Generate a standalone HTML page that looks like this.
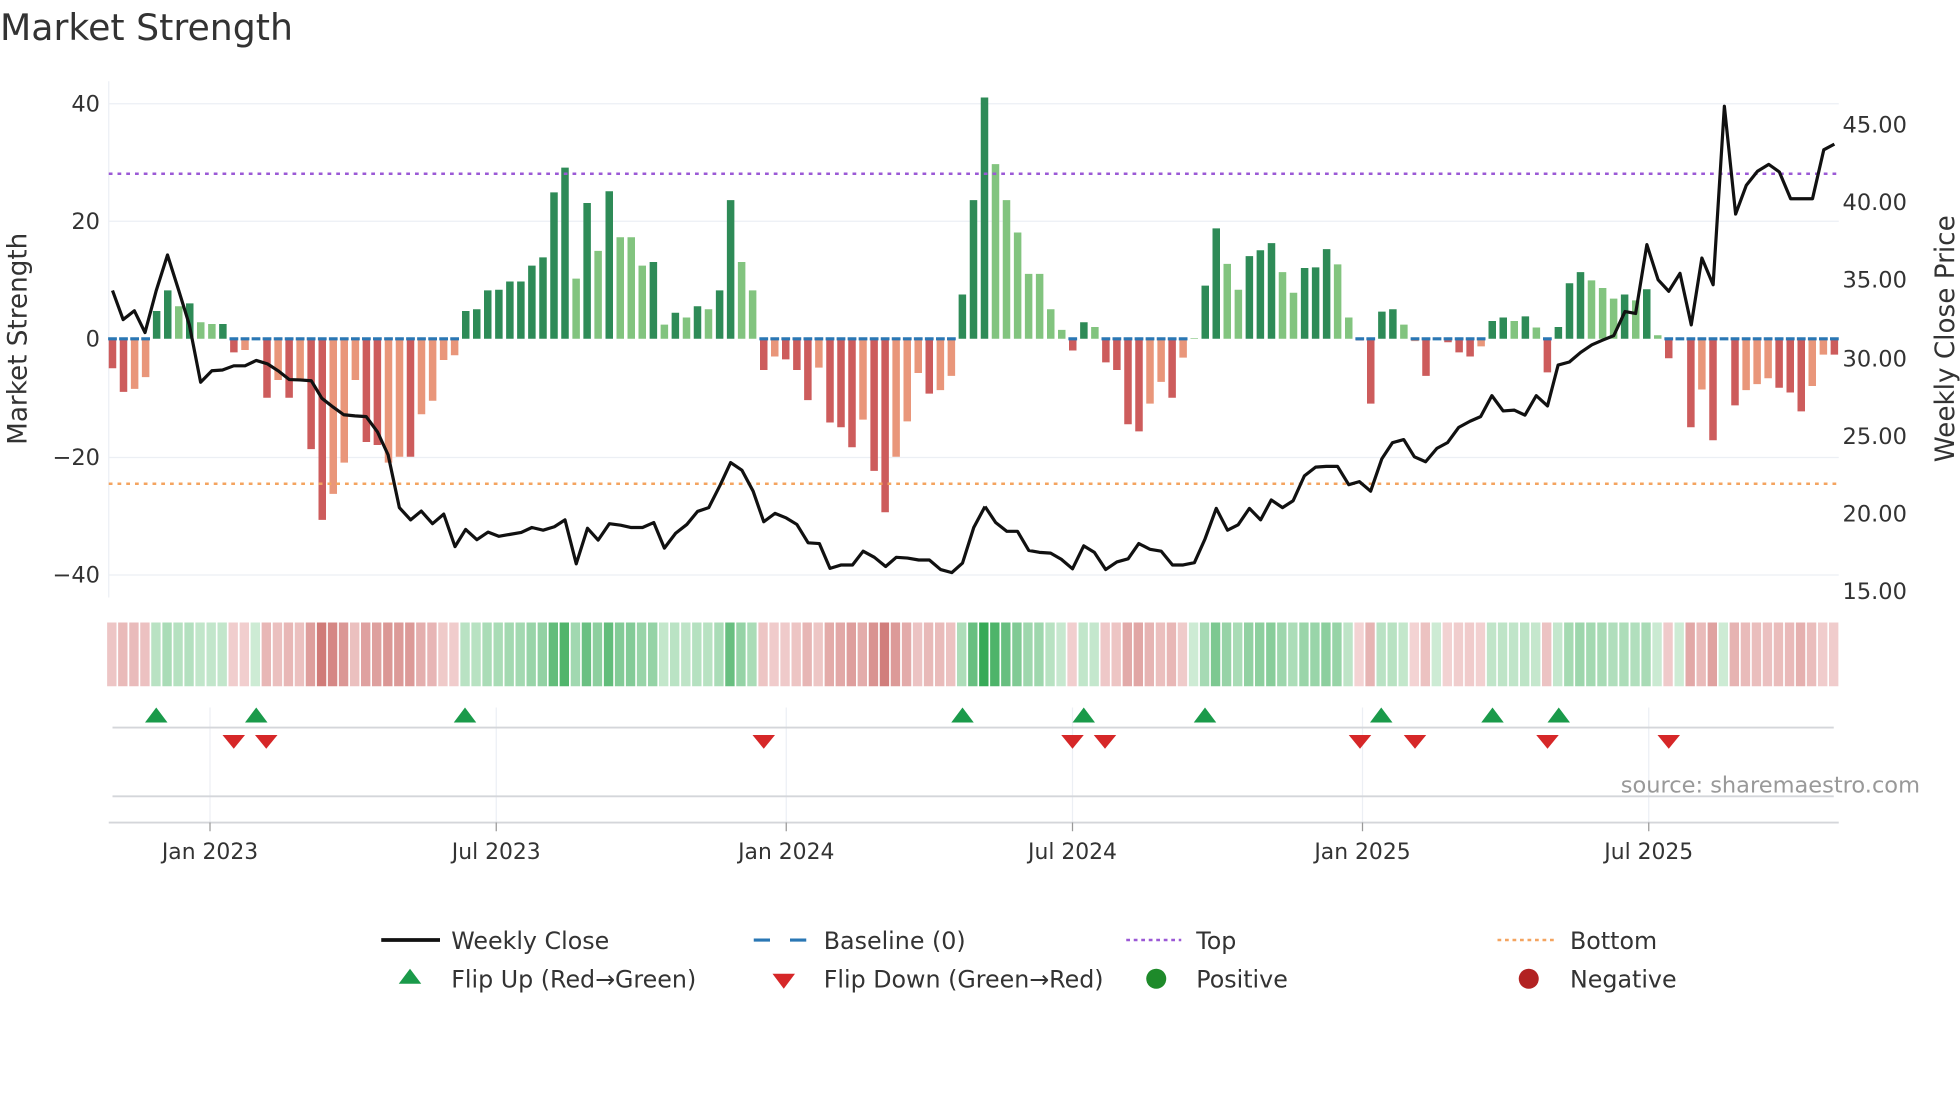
<!DOCTYPE html>
<html><head><meta charset="utf-8"><style>
html,body{margin:0;padding:0;background:#fff;overflow:hidden}
svg{display:block;font-family:"DejaVu Sans","Liberation Sans",sans-serif}
</style></head><body>
<svg id="s" width="1960" height="1102" viewBox="0 0 1568 881.6" xmlns="http://www.w3.org/2000/svg">
<rect width="1568" height="882" fill="#fff"/>
<text x="0" y="32" font-size="29" fill="#333">Market Strength</text>
<g stroke="#eceff4" stroke-width="1">
<line x1="87" x2="1471" y1="83" y2="83"/><line x1="87" x2="1471" y1="177" y2="177"/><line x1="87" x2="1471" y1="366" y2="366"/><line x1="87" x2="1471" y1="460" y2="460"/>
<line x1="87" x2="87" y1="65" y2="478"/>
</g>
<g font-size="18" fill="#333" text-anchor="end">
<text x="80" y="89">40</text><text x="80" y="183">20</text><text x="80" y="277">0</text><text x="80" y="372">−20</text><text x="80" y="466">−40</text>
</g>
<g font-size="18" fill="#333">
<text x="1474" y="106">45.00</text><text x="1474" y="168">40.00</text><text x="1474" y="230">35.00</text><text x="1474" y="293">30.00</text><text x="1474" y="355">25.00</text><text x="1474" y="417">20.00</text><text x="1474" y="479">15.00</text>
</g>
<text transform="translate(21,271) rotate(-90)" font-size="21" fill="#333" text-anchor="middle">Market Strength</text>
<text transform="translate(1563,271) rotate(-90)" font-size="21" fill="#333" text-anchor="middle">Weekly Close Price</text>
<g id="bars"></g>
<line x1="87" x2="1471" y1="139" y2="139" stroke="#9b59d6" stroke-width="2" stroke-dasharray="3,4"/>
<line x1="87" x2="1471" y1="387" y2="387" stroke="#f4a460" stroke-width="2" stroke-dasharray="3,4"/>
<g transform="scale(0.5,0.3058)"><polyline fill="none" stroke="#111" stroke-width="3.2" vector-effect="non-scaling-stroke" stroke-linejoin="round" points="180,760 197,836 215,813 232,870 250,760 268,667 286,760 303,850 321,1000 339,970 356,968 374,957 392,957 410,943 428,952 445,970 463,993 480,994 498,996 515,1042 533,1065 550,1085 568,1088 586,1090 604,1130 621,1190 639,1328 657,1360 674,1337 692,1370 710,1345 728,1430 745,1385 763,1412 781,1392 798,1403 816,1398 834,1393 851,1380 869,1387 887,1378 904,1360 922,1475 940,1382 957,1413 975,1370 993,1374 1010,1380 1028,1380 1046,1367 1063,1434 1081,1395 1099,1372 1116,1338 1134,1328 1152,1270 1169,1210 1187,1230 1205,1285 1222,1365 1240,1343 1258,1355 1275,1372 1293,1420 1311,1422 1328,1487 1346,1478 1364,1478 1381,1442 1399,1458 1417,1482 1434,1458 1452,1460 1470,1465 1487,1465 1505,1490 1523,1498 1540,1473 1558,1380 1576,1325"/></g>
<g transform="translate(784,0) scale(0.5,0.3058)"><polyline fill="none" stroke="#111" stroke-width="3.2" vector-effect="non-scaling-stroke" stroke-linejoin="round" points="8,1325 25,1367 43,1390 60,1390 78,1440 95,1445 113,1447 130,1463 148,1488 166,1428 183,1445 201,1490 219,1470 237,1462 254,1422 272,1437 290,1442 308,1478 325,1478 343,1472 360,1410 378,1330 396,1387 413,1373 431,1330 449,1360 466,1308 484,1328 501,1310 519,1245 537,1222 554,1220 572,1220 590,1268 607,1260 625,1285 643,1200 660,1158 678,1150 695,1195 713,1208 731,1173 748,1158 766,1118 784,1102 801,1090 819,1035 837,1075 855,1073 872,1086 890,1035 908,1062 925,955 943,947 961,922 979,902 996,890 1014,878 1032,815 1049,820 1067,640 1085,732 1102,762 1120,715 1138,850 1155,675 1173,745 1191,278 1209,560 1226,485 1244,448 1262,430 1279,450 1297,520 1315,520 1332,520 1350,392 1367,377"/></g>
<g id="heat"></g>
<g stroke="#eceff4" stroke-width="1">
<line x1="168" x2="168" y1="566" y2="658"/><line x1="397" x2="397" y1="566" y2="658"/><line x1="629" x2="629" y1="566" y2="658"/><line x1="858" x2="858" y1="566" y2="658"/><line x1="1090" x2="1090" y1="566" y2="658"/><line x1="1319" x2="1319" y1="566" y2="658"/>
</g>
<line x1="90" x2="1467" y1="582" y2="582" stroke="#d4d6da" stroke-width="1.5"/>
<line x1="90" x2="1467" y1="637" y2="637" stroke="#d4d6da" stroke-width="1.5"/>
<line x1="87" x2="1471" y1="658" y2="658" stroke="#d4d6da" stroke-width="1.5"/>
<g stroke="#999" stroke-width="1">
<line x1="168" x2="168" y1="658" y2="665"/><line x1="397" x2="397" y1="658" y2="665"/><line x1="629" x2="629" y1="658" y2="665"/><line x1="858" x2="858" y1="658" y2="665"/><line x1="1090" x2="1090" y1="658" y2="665"/><line x1="1319" x2="1319" y1="658" y2="665"/>
</g>
<g id="marks"></g>
<text x="1536" y="634" font-size="18" fill="#999" text-anchor="end">source: sharemaestro.com</text>
<g font-size="17.5" fill="#333" text-anchor="middle">
<text x="168" y="687">Jan 2023</text><text x="397" y="687">Jul 2023</text><text x="629" y="687">Jan 2024</text><text x="858" y="687">Jul 2024</text><text x="1090" y="687">Jan 2025</text><text x="1319" y="687">Jul 2025</text>
</g>
<g font-size="19" fill="#333">
<line x1="305" x2="352" y1="752" y2="752" stroke="#111" stroke-width="3"/><text x="361" y="759">Weekly Close</text>
<line x1="603" x2="645" y1="752" y2="752" stroke="#2a77b4" stroke-width="2.5" stroke-dasharray="13,16"/><text x="659" y="759">Baseline (0)</text>
<line x1="901" x2="945" y1="752" y2="752" stroke="#9b59d6" stroke-width="2" stroke-dasharray="3,3"/><text x="957" y="759">Top</text>
<line x1="1198" x2="1243" y1="752" y2="752" stroke="#f4a460" stroke-width="2" stroke-dasharray="3,3"/><text x="1256" y="759">Bottom</text>
<polygon points="319,787 337,787 328,775" fill="#1a9a4a"/><text x="361" y="790">Flip Up (Red→Green)</text>
<polygon points="618,779 636,779 627,791" fill="#d62728"/><text x="659" y="790">Flip Down (Green→Red)</text>
<circle cx="925" cy="783" r="8" fill="#1e8a2a"/><text x="957" y="790">Positive</text>
<circle cx="1223" cy="783" r="8" fill="#b22222"/><text x="1256" y="790">Negative</text>
</g>
</svg>
<script>
var A=[[-5,1],[-9,1],[-8.5,0],[-6.5,0],[4.7,1],[8.2,1],[5.5,0],[6,1],[2.8,0],[2.5,0],[2.5,1],[-2.3,1],[-1.9,0],[0,0],[-10,1],[-7,0],[-10,1],[-7,0],[-18.7,1],[-30.7,1],[-26.3,0],[-21,0],[-7,0],[-17.5,1],[-18,1],[-21,0],[-20,0],[-20,1],[-12.8,0],[-10.5,0],[-3.6,0],[-2.8,0],[4.7,1],[5,1],[8.2,1],[8.3,1],[9.7,1],[9.7,1],[12.4,1],[13.8,1],[24.8,1],[29,1],[10.2,0],[23,1],[14.9,0],[25,1],[17.2,0],[17.2,0],[12.4,0],[13,1],[2.4,0],[4.4,1],[3.6,0],[5.5,1],[5,0],[8.2,1],[23.5,1],[13,0],[8.2,0],[-5.3,1],[-3,0],[-3.5,1],[-5.3,1],[-10.4,1],[-4.9,0],[-14.2,1],[-15,1],[-18.4,1],[-13.7,0],[-22.4,1],[-29.4,1],[-20,0],[-14,0],[-5.8,0],[-9.3,1],[-8.7,0],[-6.3,0],[7.5,1],[23.5,1],
[40.9,1],[29.6,0],[23.5,0],[18,0],[11,0],[11,0],[5,0],[1.5,0],[-2,1],[2.8,1],[2,0],[-4,1],[-5.3,1],[-14.5,1],[-15.7,1],[-11,0],[-7.3,0],[-10,1],[-3.2,0],[0.1,0],[9,1],[18.7,1],[12.7,0],[8.3,0],[14,1],[15,1],[16.2,1],[11.3,0],[7.8,0],[12,1],[12.1,1],[15.2,1],[12.6,0],[3.6,0],[-0.3,1],[-11,1],[4.6,1],[5,1],[2.4,0],[-0.4,0],[-6.3,1],[0,0],[-0.6,1],[-2.3,1],[-3,1],[-1.3,0],[3,1],[3.6,1],[3,0],[3.8,1],[1.9,0],[-5.7,1],[2,1],[9.4,1],[11.3,1],[9.9,0],[8.6,0],[6.8,0],[7.5,1],[6.5,0],[8.4,1],[0.6,0],[-3.3,1],[0,0],[-15,1],[-8.6,0],[-17.2,1],[0,0],[-11.3,1],[-8.7,0],[-7.7,0],[-6.7,0],[-8.3,1],[-9.1,1],[-12.3,1],[-8,0],[-2.7,0],[-2.7,1]];
var N=A.length,x0=90,dx=(1467.5-90)/(N-1),h='',hm='';
for(var i=0;i<N;i++){var v=A[i][0],d=A[i][1],x=x0+i*dx,c;
 if(v>=0)c=d?'#2e8b57':'#82c47f';else c=d?'#cd5c5c':'#e9967a';
 var hh=Math.abs(v)*4.72,y=v>=0?271-hh:271;
 if(hh>0.3)h+='<rect x="'+(x-3).toFixed(1)+'" y="'+y.toFixed(1)+'" width="6" height="'+hh.toFixed(1)+'" fill="'+c+'"/>';
 if(v<=0||hh<=0.3)h+='<rect x="'+(x-3.5).toFixed(1)+'" y="269.8" width="7" height="2.5" fill="#2a77b4"/>';
 var t=Math.min(Math.abs(v)/35,1),col;
 if(v>=0){var r=Math.round(205-t*150),g=Math.round(235-t*65),b=Math.round(212-t*125);col='rgb('+r+','+g+','+b+')';}
 else{var r2=Math.round(243-t*40),g2=Math.round(212-t*102),b2=Math.round(212-t*105);col='rgb('+r2+','+g2+','+b2+')';}
 hm+='<rect x="'+(x-4.3).toFixed(1)+'" y="498" width="'+(dx-1.3).toFixed(1)+'" height="51" fill="'+col+'"/>';
}
document.getElementById('bars').innerHTML=h;
document.getElementById('heat').innerHTML=hm;
var up=[125,205,372,770,867,964,1105,1194,1247],dn=[187,213,611,858,884,1088,1132,1238,1335],m='';
up.forEach(function(x){m+='<polygon points="'+(x-9)+',578 '+(x+9)+',578 '+x+',566" fill="#1a9a4a"/>';});
dn.forEach(function(x){m+='<polygon points="'+(x-9)+',588 '+(x+9)+',588 '+x+',599" fill="#d62728"/>';});
document.getElementById('marks').innerHTML=m;
</script>
</body></html>
